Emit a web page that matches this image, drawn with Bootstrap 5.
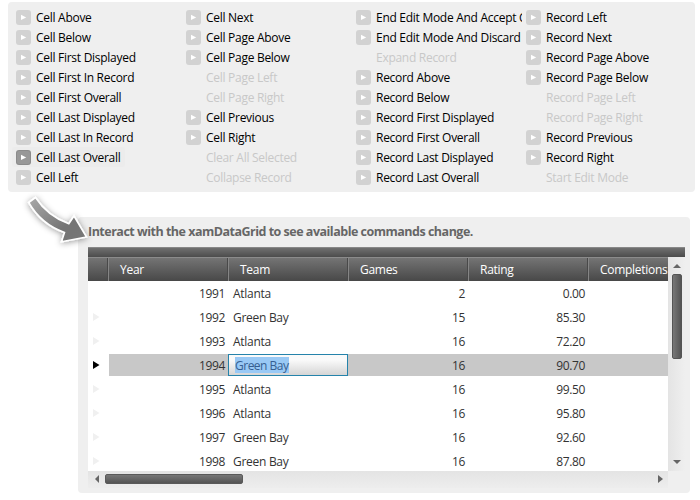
<!DOCTYPE html>
<html lang="en">
<head>
<meta charset="utf-8">
<meta name="viewport" content="width=device-width, initial-scale=1">
<title>xamDataGrid Commands</title>
<link href="https://cdn.jsdelivr.net/npm/bootstrap@5.3.0/dist/css/bootstrap.min.css" rel="stylesheet">
<style>
body{font-family:"Open Sans","Noto Sans",sans-serif;font-size:12px;line-height:20px;letter-spacing:-.28px;color:#000;width:700px;height:500px;overflow:hidden;background:#fff}
.commands{margin:2px 5px 0 8px;height:190px;padding:5px 0 5px 4px;background:#efefef;border-radius:4px}
.cmd-col{width:170px}
.cmd{height:20px;padding-left:4px;white-space:nowrap}
.cmd svg{width:15px;height:15px;flex:none;margin:3px 5px 0 0}
.cmd-text{width:147px;padding-top:1px;overflow:hidden}
.cmd.off{color:#c8c8c8;padding-left:24px}
.cmd.hot{background:#ececec;width:113px;border-radius:2px}
.grid-panel{margin:25px 10px 0 78px;height:276px;padding:0 5px 5px 10px;background:#efefef;border-radius:4px}
.grid-title{height:30px;line-height:29px;color:#666;font-size:12.5px;font-weight:700;letter-spacing:-.5px;white-space:nowrap}
.group-bar{height:10px;background:linear-gradient(#707070,#4c4c4c);border-top:1px solid #888}
.grid-view{width:580px;height:214px;background:#fff}
.grid-head{height:24px;color:#fff;background:linear-gradient(#747474,#484848);border-top:1px solid #8b8b8b;line-height:24px}
.hc{width:120px;padding-left:11px;border-left:1px solid #858585;border-right:1px solid #494949;white-space:nowrap;flex:none}
.hc.first{width:20px;border-left:0;padding:0}
.grid-rows{padding-top:1px;height:190px;overflow:hidden}
.grid-row{height:24px;line-height:22px;color:#333}
.mk{width:21px;height:22px;padding:7px 0 0 5px;flex:none}
.mk svg{display:block}
.rc{height:22px;width:120px;flex:none;padding:2px 3px 0 5px;line-height:20px}
.rc.yr{width:119px;letter-spacing:-.35px}
.rc.num{letter-spacing:-.35px}
.rc.last{width:80px}
.active-row .rc{background:#c8c8c8}
.active-row .editor{background:linear-gradient(#fafafa 25%,#d5d5d5);border:1px solid #2583ab;padding:2px 0 0 6px;line-height:17px}
.picked{display:inline-block;height:16px;background:#99c9f5;color:#365f91;letter-spacing:-.5px}
.vscroll{width:17px;height:214px;background:linear-gradient(90deg,#e4e4e4,#efefef);padding:7px 3px 7px 4px}
.vthumb{width:10px;height:85px;margin-top:6px;border-radius:2px;background:linear-gradient(90deg,#777,#555);border:1px solid #555}
.hscroll{width:580px;height:17px;background:linear-gradient(#e4e4e4,#ededed);padding:3px 5px 0 7px}
.hthumb{width:138px;height:10px;margin-left:6px;border-radius:2px;background:linear-gradient(#777,#555);border:1px solid #5a5a5a}
.h-arrow{margin-top:1px}
.pointer{left:14px;top:184px}
</style>
<script src="https://cdn.jsdelivr.net/npm/bootstrap@5.3.0/dist/js/bootstrap.bundle.min.js"></script>
</head>
<body class="position-relative">
<svg width="0" height="0" class="position-absolute">
<defs>
<g id="play"><rect width="15" height="15" rx="3" fill="#d2d2d2"/><path d="M5 4.7 10.2 7.5 5 10z" fill="#fff"/></g>
<g id="play-hot"><rect width="15" height="15" rx="3" fill="#8b8b8b"/><rect x="1" y="1" width="13" height="13" rx="2" fill="#989898"/><path d="M5 4.7 10.2 7.5 5 10z" fill="#fff"/></g>
</defs>
</svg>
<section class="commands d-flex" id="commands"></section>
<section class="grid-panel">
<div class="grid-title">Interact with the xamDataGrid to see available commands change.</div>
<div class="group-bar"></div>
<div class="d-flex">
<div class="grid-view overflow-hidden">
<div class="grid-head d-flex overflow-hidden"><div class="hc first"></div><div class="hc">Year</div><div class="hc">Team</div><div class="hc">Games</div><div class="hc">Rating</div><div class="hc">Completions</div></div>
<div class="grid-rows" id="rows"></div>
</div>
<div class="vscroll d-flex flex-column">
<svg class="mx-auto d-block flex-shrink-0" width="8" height="4"><path d="M0 4 4 0 8 4z" fill="#666"/></svg>
<div class="vthumb flex-shrink-0"></div>
<svg class="mx-auto d-block mt-auto flex-shrink-0" width="8" height="4"><path d="M0 0H8L4 4z" fill="#666"/></svg>
</div>
</div>
<div class="hscroll d-flex">
<svg class="h-arrow flex-shrink-0" width="4" height="8"><path d="M4 0V8L0 4z" fill="#666"/></svg>
<div class="hthumb"></div>
<svg class="h-arrow ms-auto flex-shrink-0" width="5" height="8"><path d="M0 0 5 4 0 8z" fill="#666"/></svg>
</div>
</section>
<svg class="pointer position-absolute" width="90" height="70">
<defs>
<linearGradient id="steel" x1="0" y1="0" x2="1" y2="1"><stop offset="0" stop-color="#aaa"/><stop offset=".65" stop-color="#747474"/><stop offset="1" stop-color="#777"/></linearGradient>
<filter id="soft" x="-20%" y="-20%" width="140%" height="150%"><feDropShadow dx="0" dy="1" stdDeviation="3" flood-opacity=".4"/></filter>
</defs>
<path d="M21.5 13.5C29 25 39 34 54.8 39.8L60 32 72.5 53 47.5 57.7 50.5 48.5C35 43 23 33 14.7 18.5Z" fill="url(#steel)" stroke="#fff" stroke-width="1.6" filter="url(#soft)"/>
</svg>
<script>
const commands = [
  ["Cell Above","Cell Below","Cell First Displayed","Cell First In Record","Cell First Overall","Cell Last Displayed","Cell Last In Record","*Cell Last Overall","Cell Left"],
  ["Cell Next","Cell Page Above","Cell Page Below","-Cell Page Left","-Cell Page Right","Cell Previous","Cell Right","-Clear All Selected","-Collapse Record"],
  ["End Edit Mode And Accept C","End Edit Mode And Discard","-Expand Record","Record Above","Record Below","Record First Displayed","Record First Overall","Record Last Displayed","Record Last Overall"],
  ["Record Left","Record Next","Record Page Above","Record Page Below","-Record Page Left","-Record Page Right","Record Previous","Record Right","-Start Edit Mode"]
];
document.getElementById("commands").innerHTML = commands.map(col => `<div class="cmd-col">${col.map(c => {
  const off = c[0] === "-", hot = c[0] === "*", name = c.replace(/^[-*]/, "");
  const icon = off ? "" : `<svg><use href="#play${hot ? "-hot" : ""}"/></svg>`;
  return `<div class="cmd d-flex align-items-start${off ? " off" : hot ? " hot" : ""}">${icon}<span class="cmd-text">${name}</span></div>`;
}).join("")}</div>`).join("");

const seasons = [[1991,"Atlanta",2,"0.00"],[1992,"Green Bay",15,"85.30"],[1993,"Atlanta",16,"72.20"],[1994,"Green Bay",16,"90.70"],[1995,"Atlanta",16,"99.50"],[1996,"Atlanta",16,"95.80"],[1997,"Green Bay",16,"92.60"],[1998,"Green Bay",16,"87.80"]];
document.getElementById("rows").innerHTML = seasons.map(([y, t, g, r], i) => {
  const on = y === 1994;
  const mark = i === 0 ? "" : `<svg width="7" height="8"><path d="M0 0 6.5 4 0 8z" fill="${on ? "#000" : "#f0f0f0"}"/></svg>`;
  return `<div class="grid-row d-flex${on ? " active-row" : ""}"><div class="mk">${mark}</div><div class="rc yr text-end">${y}</div><div class="rc${on ? " editor" : ""}">${on ? `<span class="picked">${t}</span>` : t}</div><div class="rc num text-end">${g}</div><div class="rc num text-end">${r}</div><div class="rc last"></div></div>`;
}).join("");
</script>
</body>
</html>
